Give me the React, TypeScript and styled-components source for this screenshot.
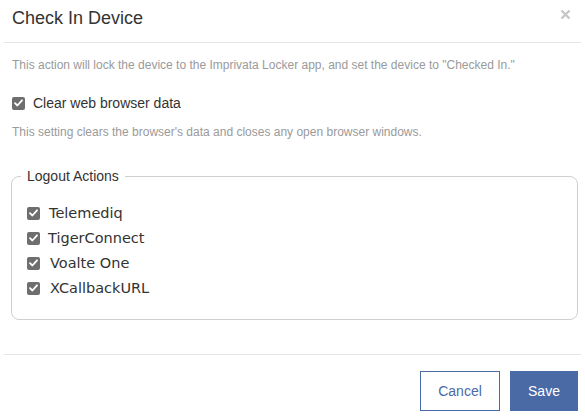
import React from 'react';
import styled, { createGlobalStyle } from 'styled-components';

const GlobalStyle = createGlobalStyle`
  html, body {
    margin: 0;
    padding: 0;
    background: #ffffff;
  }
  body {
    font-family: "Liberation Sans", Arial, sans-serif;
    color: #333333;
  }
`;

const Modal = styled.div`
  width: 585px;
  height: 418px;
  background: #ffffff;
  display: flex;
  flex-direction: column;
`;

const Header = styled.div`
  position: relative;
  height: 42px;
  margin: 0 4px;
  padding: 0 8px;
  display: flex;
  align-items: center;
  border-bottom: 1px solid #e5e5e5;
`;

const Title = styled.h4`
  margin: 0 0 6px;
  font-size: 18px;
  font-weight: 400;
  color: #333333;
`;

const CloseButton = styled.button`
  position: absolute;
  top: 7px;
  right: 9px;
  width: 14px;
  height: 14px;
  padding: 0;
  border: 0;
  background: none;
  display: flex;
  align-items: center;
  justify-content: center;
  cursor: pointer;
`;

const Body = styled.div`
  padding: 0 7px 0 12px;
  display: flex;
  flex-direction: column;
`;

const Hint = styled.p<{ $top: number }>`
  margin: ${(p) => p.$top}px 0 0;
  font-size: 12px;
  line-height: 17px;
  color: #9a9a9a;
`;

const CheckRow = styled.label<{ $font?: string; $size?: number; $gap?: number }>`
  display: flex;
  align-items: center;
  gap: ${(p) => p.$gap ?? 8}px;
  height: 20px;
  font-family: ${(p) => p.$font ?? '"Liberation Sans", Arial, sans-serif'};
  font-size: ${(p) => p.$size ?? 14}px;
  color: #333333;
`;

const TopCheck = styled(CheckRow)`
  margin-top: 19px;
`;

const Box = styled.span`
  width: 13px;
  height: 13px;
  border-radius: 2px;
  background: #6e6e6e;
  display: flex;
  align-items: center;
  justify-content: center;
  flex-shrink: 0;
`;

const Fieldset = styled.fieldset`
  margin: 26px 0 0 -1px;
  padding: 18px 15px 21px;
  border: 1px solid #cfcfcf;
  border-radius: 8px;
  min-width: 0;
  display: flex;
  flex-direction: column;
  gap: 5px;
`;

const Legend = styled.legend`
  margin-left: -6px;
  padding: 0 6px;
  font-size: 14px;
  line-height: 18px;
  color: #333333;
`;

const Footer = styled.div`
  margin: 34px 4px 0;
  padding: 16px 3px 0 0;
  border-top: 1px solid #e5e5e5;
  display: flex;
  justify-content: flex-end;
  gap: 10px;
`;

const Button = styled.button<{ $primary?: boolean; $width: number }>`
  width: ${(p) => p.$width}px;
  height: 40px;
  font-family: "Liberation Sans", Arial, sans-serif;
  font-size: 14px;
  border: 1px solid #4a6aa6;
  background: ${(p) => (p.$primary ? '#4a6aa6' : '#ffffff')};
  color: ${(p) => (p.$primary ? '#ffffff' : '#4a6aa6')};
  cursor: pointer;
`;

const CheckMark = () => (
  <svg width="9" height="8" viewBox="0 0 9 8">
    <path d="M1 4.2 L3.4 6.5 L8 1.3" fill="none" stroke="#ffffff" strokeWidth="1.8" strokeLinecap="round" strokeLinejoin="round" />
  </svg>
);

const Checkbox = () => (
  <Box>
    <CheckMark />
  </Box>
);

const actions = ['Telemediq', 'TigerConnect', 'Voalte One', 'XCallbackURL'];
const textGap = [9, 8, 10, 10];

export default function App() {
  return (
    <>
      <GlobalStyle />
      <Modal>
        <Header>
          <Title>Check In Device</Title>
          <CloseButton aria-label="Close">
            <svg width="11" height="11" viewBox="0 0 11 11">
              <path d="M1.5 1.5 L9.5 9.5 M9.5 1.5 L1.5 9.5" stroke="#c6c6c6" strokeWidth="2.4" />
            </svg>
          </CloseButton>
        </Header>
        <Body>
          <Hint $top={14}>
            This action will lock the device to the Imprivata Locker app, and set the device to "Checked In."
          </Hint>
          <TopCheck>
            <Checkbox />
            Clear web browser data
          </TopCheck>
          <Hint $top={11}>This setting clears the browser's data and closes any open browser windows.</Hint>
          <Fieldset>
            <Legend>Logout Actions</Legend>
            {actions.map((name, i) => (
              <CheckRow key={name} $font='"DejaVu Sans", Verdana, sans-serif' $size={14.5} $gap={textGap[i]}>
                <Checkbox />
                {name}
              </CheckRow>
            ))}
          </Fieldset>
        </Body>
        <Footer>
          <Button $width={80}>Cancel</Button>
          <Button $primary $width={68}>Save</Button>
        </Footer>
      </Modal>
    </>
  );
}
